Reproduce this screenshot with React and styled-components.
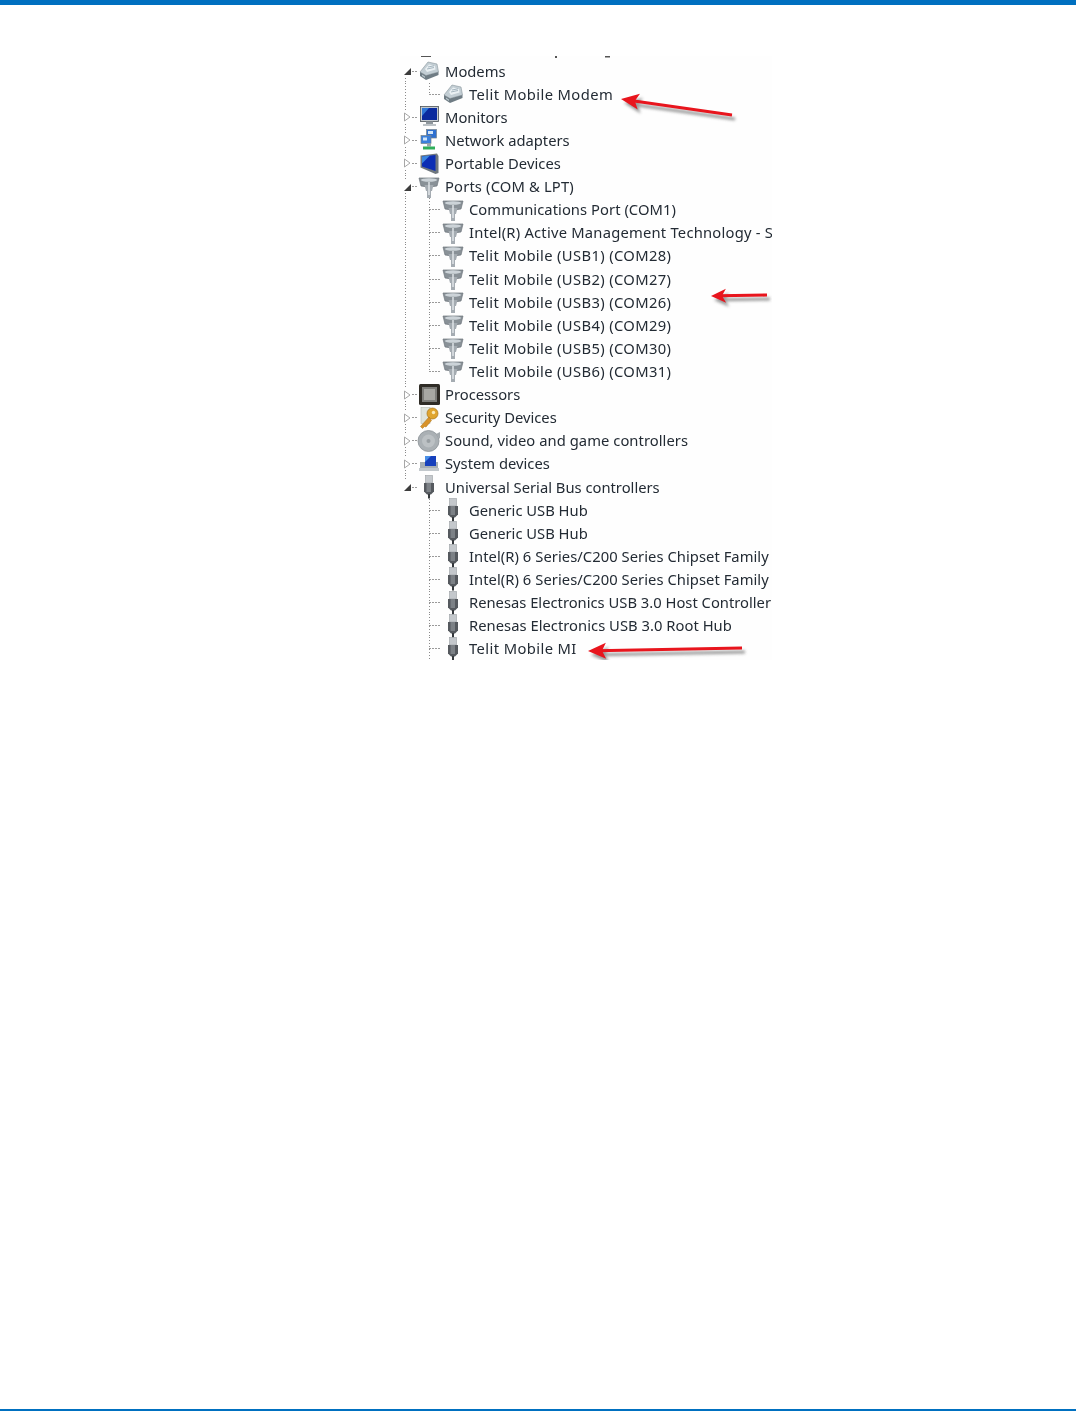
import React from "react";
import styled, { createGlobalStyle } from "styled-components";

const Global = createGlobalStyle`
  html, body { margin: 0; padding: 0; background: #fff; }
  #root { height: 1411px; }
`;

const Page = styled.div`
  height: 1411px;
  display: flex;
  flex-direction: column;
  box-sizing: border-box;
  background: #fff;
`;
const TopBar = styled.div`
  height: 5px;
  flex: none;
  background: #0070c0;
`;
const Content = styled.main`
  flex: 1;
  display: flex;
  justify-content: center;
  padding: 51px 0 0 96px;
  box-sizing: border-box;
`;
const BottomBar = styled.div`
  height: 2px;
  flex: none;
  background: #0070c0;
`;
const Figure = styled.figure`
  position: relative;
  margin: 0;
  width: 372px;
  height: 604px;
  overflow: hidden;
  background: #fefefe;
`;
const Tree = styled.ul`
  list-style: none;
  margin: 0;
  padding: 3.5px 0 0;
  filter: blur(0.7px);
  font-family: "Noto Sans", "Open Sans", sans-serif;
  font-size: 14.75px;
  color: #232b34;
`;
const Row = styled.li`
  height: 23.12px;
  display: flex;
  align-items: center;
  white-space: nowrap;
`;

const dots = "repeating-linear-gradient(to bottom, #8a8a8a 0 1px, transparent 1px 3px)";
const dash = "repeating-linear-gradient(to right, #9a9a9a 0 2px, transparent 2px 3px)";

const Gutter = styled.span`
  flex: none;
  align-self: stretch;
  display: flex;
  align-items: center;
  width: ${(p) => p.$width}px;
  background-image: ${(p) => [
    p.$top ? dots : null,
    p.$bottom ? dots : null,
    p.$tick ? dash : null,
  ].filter(Boolean).join(", ") || "none"};
  background-repeat: no-repeat;
  background-position: ${(p) => [
    p.$top ? `${p.$x}px 0` : null,
    p.$bottom ? `${p.$x}px 100%` : null,
    p.$tick ? `${p.$x + (p.$tickFrom || 0)}px 50%` : null,
  ].filter(Boolean).join(", ") || "0 0"};
  background-size: ${(p) => [
    p.$top ? `1px ${p.$top}px` : null,
    p.$bottom ? `1px ${p.$bottom}px` : null,
    p.$tick ? `${p.$tick}px 1px` : null,
  ].filter(Boolean).join(", ") || "auto"};
`;
const Expander = styled.svg`
  width: 9px;
  height: 10px;
  margin-left: 3px;
  flex: none;
`;
const IconBox = styled.svg`
  width: 24px;
  height: 24px;
  flex: none;
  margin: 0 4px 0 -1px;
`;
const Label = styled.span`
  display: block;
  line-height: 23px;
  letter-spacing: ${(p) => p.$track || 0}px;
`;
const Arrows = styled.svg`
  position: absolute;
  left: 0;
  top: 0;
  width: 372px;
  height: 604px;
  filter: blur(0.45px);
  pointer-events: none;
`;
const Remnant = styled.svg`
  position: absolute;
  left: 0;
  top: 0;
  width: 372px;
  height: 4px;
  filter: blur(0.5px);
`;

const icons = {
  modem: (
    <g>
      <path d="M3 13 L11 3 L20 5 L21.5 13 L9 16.5Z" fill="#c3ced4" stroke="#87939a" strokeWidth=".6" />
      <path d="M8 10 L12 5.5 L18 7 L18.5 10.5 L10 13Z" fill="#eaf0f3" />
      <path d="M10 10 L17 8.5 M11 8 L17 6.8" stroke="#93a6b1" strokeWidth=".8" />
      <path d="M3 13 L9 16.5 L21.5 13 V16 L9 21 L3 17Z" fill="#6f7c84" />
      <path d="M5 15.5 L8 17.5 V19 L5 17Z" fill="#b6c4ca" />
    </g>
  ),
  monitor: (
    <g>
      <rect x="3.5" y="1.5" width="18" height="15" fill="#c3c9ce" stroke="#4d5358" strokeWidth=".8" />
      <rect x="5" y="3" width="15" height="12" fill="#0a2a9e" />
      <path d="M5 3 H12 L5 11Z" fill="#2f78d8" />
      <rect x="9" y="16.5" width="7" height="2.5" fill="#8f979d" />
      <rect x="6" y="19" width="13" height="2" fill="#bcc2c6" />
    </g>
  ),
  network: (
    <g>
      <rect x="9.5" y="1.5" width="10" height="8.5" fill="#2d6fd0" stroke="#76828b" strokeWidth=".7" />
      <rect x="4" y="7.5" width="10" height="8" fill="#3a80dc" stroke="#76828b" strokeWidth=".7" />
      <path d="M11 3 H16 V6 H11Z M6 9.5 H10 V12.5 H6Z" fill="#cfe4f8" />
      <rect x="10" y="15.5" width="4" height="3" fill="#a0a7ad" />
      <rect x="6" y="18.5" width="12" height="3" fill="#2fae5a" />
    </g>
  ),
  portable: (
    <g>
      <path d="M3.5 3.5 L20 1.5 L21.5 4 V21 L18.5 22 L3.5 15.5Z" fill="#6f777e" />
      <path d="M5 4.5 L18.5 3 V19 L5 14.5Z" fill="#0c2eb4" />
      <path d="M5 4.5 L13 3.6 L5 11.5Z" fill="#3b86e0" />
    </g>
  ),
  port: (
    <g>
      <path d="M2 3 H22 L20 11 Q12 13 4 11Z" fill="#899197" stroke="#6e767c" strokeWidth=".7" />
      <ellipse cx="12" cy="5" rx="8" ry="1.8" fill="#ccd3d8" />
      <path d="M7.5 10 H16.5 L15 16 H9Z" fill="#a4abb1" />
      <rect x="10" y="15" width="4" height="8" fill="#a5acb2" />
      <path d="M12 7 V20" stroke="#e4e9ec" strokeWidth="1.4" />
    </g>
  ),
  processor: (
    <g>
      <rect x="2" y="1" width="21" height="21" rx="1.5" fill="#2f2c26" />
      <rect x="5" y="4" width="15" height="15" fill="#7d7d79" />
      <rect x="7" y="6" width="11" height="11" fill="#a8a8a3" />
    </g>
  ),
  key: (
    <g>
      <rect x="4" y="1.5" width="9" height="16" fill="#dfe4dc" stroke="#b7bdb3" strokeWidth=".6" />
      <circle cx="15.5" cy="7.5" r="5.5" fill="#e0a52f" stroke="#a8741a" strokeWidth=".7" />
      <circle cx="16.5" cy="6.5" r="1.7" fill="#fbeab7" />
      <path d="M12 11 L3.5 20.5 L5.5 22.5 L7.5 20.5 L9 21 L14.5 14.5Z" fill="#d8932a" stroke="#a8741a" strokeWidth=".5" />
    </g>
  ),
  sound: (
    <g>
      <circle cx="11.5" cy="12" r="10.5" fill="#aab0b4" stroke="#8c9297" strokeWidth=".8" />
      <circle cx="11.5" cy="12" r="6.5" fill="#bcc1c4" />
      <circle cx="11.5" cy="12" r="2" fill="#989ea2" />
      <path d="M19 5 L23 3 V10Z" fill="#a4aaae" />
    </g>
  ),
  system: (
    <g>
      <rect x="3" y="10" width="18" height="7" fill="#a6aeb4" />
      <path d="M8 4 H19 V14 H8Z" fill="#1640bc" />
      <path d="M8 4 H14 L8 10Z" fill="#4a90e6" />
      <rect x="2" y="16" width="20" height="3" fill="#c2c8cc" />
    </g>
  ),
  usb: (
    <g>
      <rect x="8.5" y="0.5" width="7" height="7.5" fill="#c4c8cc" stroke="#9a9ea2" strokeWidth=".6" />
      <path d="M7 8 H17 V16.5 L14 19.5 H10 L7 16.5Z" fill="#55595e" />
      <path d="M9.5 8 H14 V17 H9.5Z" fill="#7c8186" />
      <rect x="11" y="19" width="2" height="4.5" fill="#35393d" />
    </g>
  ),
};

function Icon({ kind }) {
  return <IconBox viewBox="0 0 24 24" aria-hidden="true">{icons[kind]}</IconBox>;
}

function ParentRow({ label, icon, open, rail, track }) {
  return (
    <Row>
      <Gutter $width={18} $x={5} $top={rail === "both" || rail === "top" ? 5 : 0} $bottom={rail === "both" || rail === "bottom" ? 5 : 0} $tick={5} $tickFrom={7}>
        <Expander viewBox="0 0 9 10" aria-hidden="true">
          {open ? (
            <path d="M1 9 H8 V2Z" fill="#3c3c3c" />
          ) : (
            <path d="M1.5 1 L7 5 L1.5 9Z" fill="#fff" stroke="#a6a6a6" />
          )}
        </Expander>
      </Gutter>
      <Icon kind={icon} />
      <Label $track={track}>{label}</Label>
    </Row>
  );
}

function ChildRow({ label, icon, rail, last, track }) {
  return (
    <Row>
      <Gutter $width={18} $x={5} $top={rail ? 24 : 0} />
      <Gutter $width={24} $x={11} $top={last ? 12 : 24} $tick={12} />
      <Icon kind={icon} />
      <Label $track={track}>{label}</Label>
    </Row>
  );
}

const ports = [
  { label: "Communications Port (COM1)", track: 0.05 },
  { label: "Intel(R) Active Management Technology - S", track: 0.22 },
  { label: "Telit Mobile (USB1) (COM28)", track: 0.36 },
  { label: "Telit Mobile (USB2) (COM27)", track: 0.36 },
  { label: "Telit Mobile (USB3) (COM26)", track: 0.36 },
  { label: "Telit Mobile (USB4) (COM29)", track: 0.36 },
  { label: "Telit Mobile (USB5) (COM30)", track: 0.36 },
  { label: "Telit Mobile (USB6) (COM31)", track: 0.36 },
];
const usb = [
  { label: "Generic USB Hub" },
  { label: "Generic USB Hub" },
  { label: "Intel(R) 6 Series/C200 Series Chipset Family", track: 0.05 },
  { label: "Intel(R) 6 Series/C200 Series Chipset Family", track: 0.05 },
  { label: "Renesas Electronics USB 3.0 Host Controller" },
  { label: "Renesas Electronics USB 3.0 Root Hub", track: 0.03 },
  { label: "Telit Mobile MI", track: 0.4 },
];

function Arrow({ tip, tail, head = 18, spread = 8 }) {
  const [tx, ty] = tip;
  const [ex, ey] = tail;
  const len = Math.hypot(ex - tx, ey - ty);
  const ux = (ex - tx) / len;
  const uy = (ey - ty) / len;
  const bx = tx + ux * head;
  const by = ty + uy * head;
  const nx = -uy;
  const ny = ux;
  const points = `${tx},${ty} ${bx + nx * spread},${by + ny * spread} ${tx + ux * (head - 4)},${ty + uy * (head - 4)} ${bx - nx * spread},${by - ny * spread}`;
  return (
    <g>
      <g transform="translate(3 4)" opacity=".6" filter="url(#soft)">
        <line x1={tx + ux * 8} y1={ty + uy * 8} x2={ex} y2={ey} stroke="#555" strokeWidth="3" />
        <polygon points={points} fill="#555" />
      </g>
      <line x1={tx + ux * 8} y1={ty + uy * 8} x2={ex} y2={ey} stroke="#e8151d" strokeWidth="3" />
      <polygon points={points} fill="#e8151d" />
    </g>
  );
}

export default function App() {
  return (
    <Page>
      <Global />
      <TopBar />
      <Content>
        <Figure>
          <Tree>
            <ParentRow label="Modems" icon="modem" open rail="bottom" />
            <ChildRow label="Telit Mobile Modem" icon="modem" rail last track={0.4} />
            <ParentRow label="Monitors" icon="monitor" rail="both" />
            <ParentRow label="Network adapters" icon="network" rail="both" />
            <ParentRow label="Portable Devices" icon="portable" rail="both" track={0.05} />
            <ParentRow label="Ports (COM & LPT)" icon="port" open rail="both" track={0.15} />
            {ports.map((p, i) => (
              <ChildRow key={p.label} label={p.label} track={p.track} icon="port" rail last={i === ports.length - 1} />
            ))}
            <ParentRow label="Processors" icon="processor" rail="both" />
            <ParentRow label="Security Devices" icon="key" rail="both" />
            <ParentRow label="Sound, video and game controllers" icon="sound" rail="both" track={0.05} />
            <ParentRow label="System devices" icon="system" rail="both" />
            <ParentRow label="Universal Serial Bus controllers" icon="usb" open rail="top" />
            {usb.map((u, i) => (
              <ChildRow key={u.label + i} label={u.label} track={u.track} icon="usb" />
            ))}
          </Tree>
          <Remnant viewBox="0 0 372 4" aria-hidden="true">
            <path d="M21 0 H31 V1 H21Z M155 0 H157 V2 H155Z M205 0 H210 V1.5 H205Z" fill="#555" />
          </Remnant>
          <Arrows viewBox="0 0 372 604" aria-hidden="true">
            <defs>
              <filter id="soft" x="-20%" y="-100%" width="140%" height="300%">
                <feGaussianBlur stdDeviation="1.6" />
              </filter>
            </defs>
            <Arrow tip={[221, 43]} tail={[332, 59]} />
            <Arrow tip={[311, 240]} tail={[367, 239]} head={15} spread={7} />
            <Arrow tip={[188, 595]} tail={[342, 592]} />
          </Arrows>
        </Figure>
      </Content>
      <BottomBar />
    </Page>
  );
}
